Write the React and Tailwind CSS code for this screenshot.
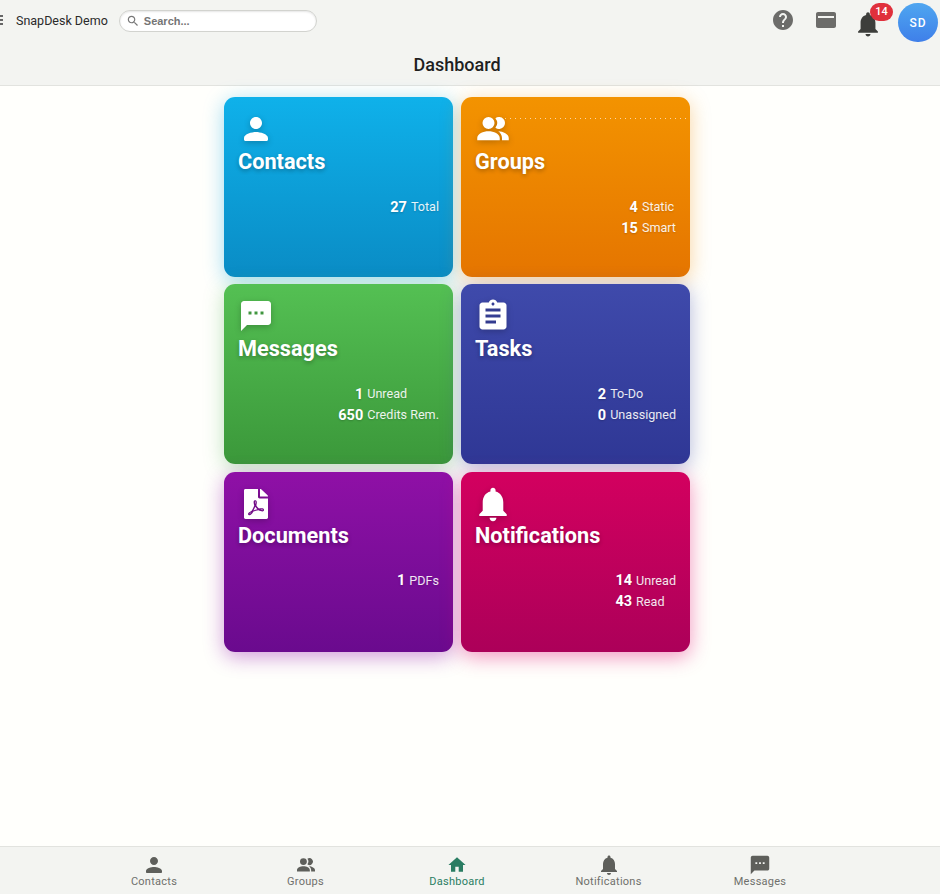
import React from "react";
import { FaFilePdf } from "react-icons/fa";

const P = {
  person: "M12 12c2.21 0 4-1.79 4-4s-1.79-4-4-4-4 1.79-4 4 1.79 4 4 4zm0 2c-2.67 0-8 1.34-8 4v1c0 .55.45 1 1 1h14c.55 0 1-.45 1-1v-1c0-2.66-5.33-4-8-4z",
  people: "M9 4a4 4 0 1 1 0 8 4 4 0 0 1 0-8z M9 13.5c-3.5 0-7.5 1.7-7.5 4.5v1.5h15V18c0-2.8-4-4.5-7.5-4.5z M13.6 4.8A4 4 0 1 1 13.6 11.2 5.2 5.2 0 0 0 13.6 4.8z M15.5 13.5c3.3.1 7 1.9 7 4.5v1.5H18V18c0-1.8-1-3.4-2.5-4.5z",
  sms: "M20 2H4c-1.1 0-1.99.9-1.99 2L2 22l4-4h14c1.1 0 2-.9 2-2V4c0-1.1-.9-2-2-2zM9 11H7V9h2v2zm4 0h-2V9h2v2zm4 0h-2V9h2v2z",
  task: "M19 3h-4.18C14.4 1.84 13.3 1 12 1c-1.3 0-2.4.84-2.82 2H5c-1.1 0-2 .9-2 2v14c0 1.1.9 2 2 2h14c1.1 0 2-.9 2-2V5c0-1.1-.9-2-2-2zm-7 0c.55 0 1 .45 1 1s-.45 1-1 1-1-.45-1-1 .45-1 1-1zm2 14H7v-2h7v2zm3-4H7v-2h10v2zm0-4H7V7h10v2z",
  bell: "M12 22c1.1 0 2-.9 2-2h-4c0 1.1.89 2 2 2zm6-6v-5c0-3.07-1.64-5.64-4.5-6.32V4c0-.83-.67-1.5-1.5-1.5s-1.5.67-1.5 1.5v.68C7.63 5.36 6 7.92 6 11v5l-2 2v1h16v-1l-2-2z",
  home: "M10 20v-6h4v6h5v-8h3L12 3 2 12h3v8z",
  help: "M12 2C6.48 2 2 6.48 2 12s4.48 10 10 10 10-4.48 10-10S17.52 2 12 2zm1 17h-2v-2h2v2zm2.07-7.75l-.9.92C13.45 12.9 13 13.5 13 15h-2v-.5c0-1.1.45-2.1 1.17-2.83l1.24-1.26c.37-.36.59-.86.59-1.41 0-1.1-.9-2-2-2s-2 .9-2 2H8c0-2.21 1.79-4 4-4s4 1.79 4 4c0 .88-.36 1.68-.93 2.25z",
  card: "M20 4H4c-1.11 0-1.99.89-1.99 2L2 18c0 1.11.89 2 2 2h16c1.11 0 2-.89 2-2V6c0-1.11-.89-2-2-2zm0 6H4V8h16v2z",
  search: "M15.5 14h-.79l-.28-.27C15.41 12.59 16 11.11 16 9.5 16 5.91 13.09 3 9.5 3S3 5.91 3 9.5 5.91 16 9.5 16c1.61 0 3.09-.59 4.23-1.57l.27.28v.79l5 4.99L20.49 19l-4.99-5zm-6 0C7.01 14 5 11.99 5 9.5S7.01 5 9.5 5 14 7.01 14 9.5 11.99 14 9.5 14z",
};

function Icon({ d, className = "", box = "0 0 24 24" }) {
  return (
    <svg viewBox={box} className={className} fill="currentColor" aria-hidden="true">
      <path d={d} fillRule="evenodd" />
    </svg>
  );
}

const iconCls = "w-9 h-9 text-white [filter:drop-shadow(0_2px_3px_rgba(0,0,0,0.22))]";

const cards = [
  {
    title: "Contacts",
    icon: <Icon d={P.person} className={iconCls} />,
    bg: "bg-gradient-to-b from-[#0fb1ea] to-[#0a8cc5]",
    glow: "shadow-[0_4px_20px_rgba(14,165,225,0.4)]",
    stats: [["27", "Total"]],
  },
  {
    title: "Groups",
    icon: <Icon d={P.people} className={iconCls} />,
    bg: "bg-gradient-to-b from-[#f39300] to-[#e57500]",
    glow: "shadow-[0_4px_20px_rgba(235,135,0,0.36)]",
    stats: [["4", "Static"], ["15", "Smart"]],
    dots: true,
  },
  {
    title: "Messages",
    icon: <Icon d={P.sms} className={iconCls} />,
    bg: "bg-gradient-to-b from-[#54c053] to-[#3b983a]",
    glow: "shadow-[0_4px_20px_rgba(76,175,80,0.36)]",
    stats: [["1", "Unread"], ["650", "Credits Rem."]],
  },
  {
    title: "Tasks",
    icon: <Icon d={P.task} className={iconCls} />,
    bg: "bg-gradient-to-b from-[#3f4aab] to-[#2f3795]",
    glow: "shadow-[0_4px_20px_rgba(63,74,171,0.4)]",
    stats: [["2", "To-Do"], ["0", "Unassigned"]],
  },
  {
    title: "Documents",
    icon: (
      <span className="w-9 h-9 flex items-center justify-center">
        <FaFilePdf className="w-[24px] h-[30px] text-white [filter:drop-shadow(0_2px_3px_rgba(0,0,0,0.22))]" preserveAspectRatio="none" />
      </span>
    ),
    bg: "bg-gradient-to-b from-[#8f10a6] to-[#6a0a8e]",
    glow: "shadow-[0_5px_20px_rgba(142,16,170,0.42)]",
    stats: [["1", "PDFs"]],
    tight: true,
  },
  {
    title: "Notifications",
    icon: <Icon d={P.bell} box="1.5 1.5 21 21" className={iconCls} />,
    bg: "bg-gradient-to-b from-[#d3005f] to-[#ac0059]",
    glow: "shadow-[0_5px_20px_rgba(225,0,110,0.42)]",
    stats: [["14", "Unread"], ["43", "Read"]],
    tight: true,
  },
];

function Card({ c }) {
  return (
    <div className={`relative h-[180px] rounded-[11px] p-[14px] flex flex-col text-white ${c.bg} ${c.glow}`}>
      {c.dots && (
        <div className="absolute left-[44px] right-0 top-[21px] h-px bg-[repeating-linear-gradient(90deg,rgba(255,255,255,0.65)_0,rgba(255,255,255,0.65)_1px,transparent_1px,transparent_5px)]" />
      )}
      {c.icon}
      <div className={`text-[21.7px] leading-[28px] font-bold [text-shadow:0_2px_4px_rgba(0,0,0,0.28)] ${c.tight ? "mt-0" : "mt-[1px]"}`}>
        {c.title}
      </div>
      <div className="mt-[21px] grid grid-cols-[auto_auto] justify-end auto-rows-[21px] items-center gap-x-[4px]">
        {c.stats.map(([n, l]) => (
          <React.Fragment key={l}>
            <span className="text-[14.5px] font-bold text-right [text-shadow:0_1px_2px_rgba(0,0,0,0.2)]">{n}</span>
            <span className="text-[12.6px] text-white/90 [text-shadow:0_1px_2px_rgba(0,0,0,0.15)]">{l}</span>
          </React.Fragment>
        ))}
      </div>
    </div>
  );
}

const nav = [
  ["Contacts", P.person, "0 0 24 24"],
  ["Groups", P.people, "-2 -2 28 28"],
  ["Dashboard", P.home, "-2 -2 28 28", true],
  ["Notifications", P.bell, "0 0 24 24"],
  ["Messages", P.sms, "-1 -1 26 26"],
];

export default function App() {
  return (
    <div className="w-[940px] h-[894px] overflow-hidden flex flex-col bg-[#fffffc] font-['Roboto',sans-serif] text-[#222]">
      <header className="h-[86px] shrink-0 bg-[#f3f4f1] border-b border-[#e2e3df] flex flex-col">
        <div className="h-[42px] flex items-start">
          <div className="w-[4px] h-[10px] mt-[15px] flex flex-col justify-between">
            <i className="block w-[3px] h-[2px] bg-[#666]" />
            <i className="block w-[3px] h-[2px] bg-[#666]" />
            <i className="block w-[3px] h-[2px] bg-[#666]" />
          </div>
          <span className="ml-[12px] mt-[12px] text-[12.5px] leading-[17px] text-[#2a2a2a]">SnapDesk Demo</span>
          <label className="ml-[11px] mt-[10px] w-[198px] h-[22px] rounded-full bg-white border border-[#d2d3cf] shadow-[inset_0_1px_2px_rgba(0,0,0,0.1)] flex items-center pl-[6px]">
            <Icon d={P.search} className="w-[14px] h-[14px] text-[#777]" />
            <span className="ml-[4px] text-[11px] font-bold font-['Liberation_Sans',sans-serif] text-[#757575]">Search...</span>
          </label>
          <div className="ml-auto flex items-start">
            <Icon d={P.help} className="w-6 h-6 mt-[8px] text-[#6c6c6a]" />
            <Icon d={P.card} className="w-6 h-6 mt-[8px] ml-[19px] text-[#6c6c6a]" />
            <div className="relative ml-[17px] mt-[11px] mr-[3px]">
              <Icon d={P.bell} box="1.5 1.5 21 21" className="w-[26px] h-[26px] text-[#3d3e3b]" />
              <span className="absolute left-[15px] -top-[8px] w-[23px] h-[18px] rounded-full bg-[#e0303c] text-white text-[11px] font-medium flex items-center justify-center">14</span>
            </div>
            <div className="ml-[14px] mr-[2px] mt-[3px] w-[40px] h-[39px] rounded-full bg-gradient-to-b from-[#4fa6f0] to-[#3f7fe9] text-white text-[12px] font-medium tracking-[1px] flex items-center justify-center">SD</div>
          </div>
        </div>
        <h1 className="w-[914px] text-center text-[18px] leading-[24px] font-medium text-[#1f1f1f] mt-[11px]">Dashboard</h1>
      </header>

      <main className="flex-1 w-[914px] pt-[11px]">
        <div className="grid grid-cols-[229px_229px] justify-center gap-x-2 gap-y-[7.25px]">
          {cards.map((c) => (
            <Card key={c.title} c={c} />
          ))}
        </div>
      </main>

      <footer className="h-[48px] shrink-0 bg-[#f3f4f1] border-t border-[#e2e3df]">
        <div className="w-[914px] flex justify-center">
          {nav.map(([label, d, box, active]) => (
            <div key={label} className={`w-[151.5px] flex flex-col items-center pt-[6px] ${active ? "text-[#2a7d63]" : "text-[#5e5f5b]"}`}>
              <Icon d={d} box={box} className="w-6 h-6" />
              <span className={`text-[11px] leading-[13px] -mt-[2px] tracking-[0.25px] ${active ? "" : "text-[#6f706c]"}`}>{label}</span>
            </div>
          ))}
        </div>
      </footer>
    </div>
  );
}
